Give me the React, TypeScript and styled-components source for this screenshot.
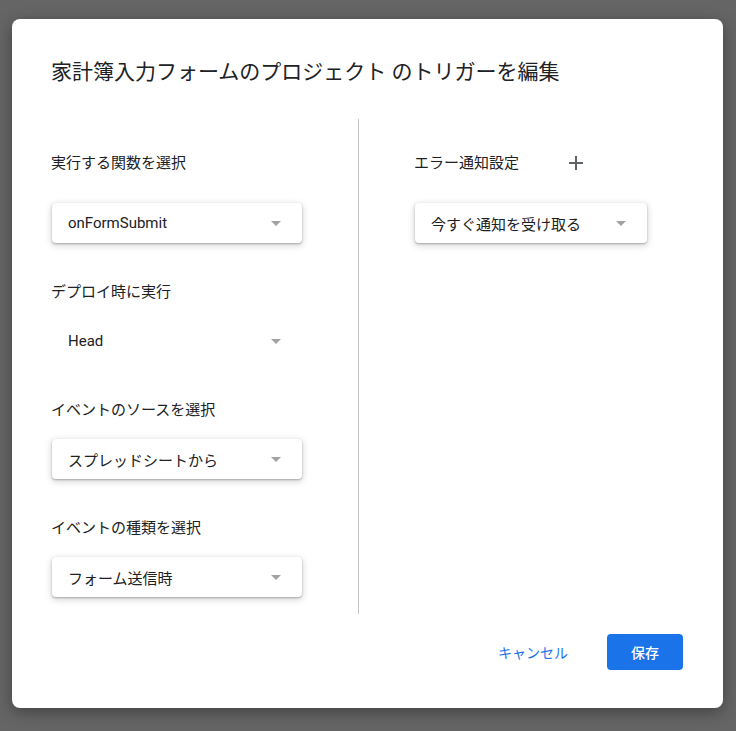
import React from 'react'
import styled, { createGlobalStyle } from 'styled-components'

const GlobalStyle = createGlobalStyle`
	html, body {
		margin: 0;
		padding: 0;
		background: #656565;
	}
	* {
		box-sizing: border-box;
	}
`

const FONT = `Roboto, "Noto Sans CJK JP", "Noto Sans", sans-serif`

interface FieldType {
	label: string
	value: string
	labelGap: number
	flat?: boolean
}

const leftFields: FieldType[] = [
	{ label: '実行する関数を選択', value: 'onFormSubmit', labelGap: 30 },
	{ label: 'デプロイ時に実行', value: 'Head', labelGap: 19, flat: true },
	{ label: 'イベントのソースを選択', value: 'スプレッドシートから', labelGap: 19 },
	{ label: 'イベントの種類を選択', value: 'フォーム送信時', labelGap: 19 },
]

export default function App() {
	return (
		<>
			<GlobalStyle />
			<Overlay>
				<Dialog>
					<Title>家計簿入力フォームのプロジェクト のトリガーを編集</Title>
					<Body>
						<LeftColumn>
							{leftFields.map((field) => (
								<Field key={field.label}>
									<Label $gap={field.labelGap}>{field.label}</Label>
									<Select $width={250} $flat={field.flat}>
										<span>{field.value}</span>
										<Arrow />
									</Select>
								</Field>
							))}
						</LeftColumn>
						<Divider />
						<RightColumn>
							<LabelRow>
								<Label $gap={0}>エラー通知設定</Label>
								<AddButton aria-label="追加">
									<svg width="14" height="14" viewBox="0 0 14 14">
										<path d="M7 0v14M0 7h14" stroke="#5f6368" strokeWidth="2" />
									</svg>
								</AddButton>
							</LabelRow>
							<Select $width={232}>
								<span>今すぐ通知を受け取る</span>
								<Arrow />
							</Select>
						</RightColumn>
					</Body>
					<Footer>
						<CancelButton>キャンセル</CancelButton>
						<SaveButton>保存</SaveButton>
					</Footer>
				</Dialog>
			</Overlay>
		</>
	)
}

const Overlay = styled.div`
	min-height: 100vh;
	padding: 19px 0 0 12px;
	font-family: ${FONT};
	color: #202124;
`

const Dialog = styled.div`
	width: 711px;
	height: 689px;
	background: #fff;
	border-radius: 8px;
	box-shadow: 0 4px 16px rgba(0, 0, 0, 0.35);
	padding: 41px 40px 38px 39px;
	display: flex;
	flex-direction: column;
`

const Title = styled.h1`
	margin: 0;
	font-size: 21px;
	line-height: 24px;
	font-weight: 400;
	color: #202124;
`

const Body = styled.div`
	margin-top: 35px;
	height: 495px;
	display: flex;
`

const LeftColumn = styled.div`
	width: 307px;
	padding-top: 34px;
	display: flex;
	flex-direction: column;
	gap: 39px;
`

const RightColumn = styled.div`
	flex: 1;
	padding: 34px 0 0 55px;
	display: flex;
	flex-direction: column;
	gap: 30px;
`

const Divider = styled.div`
	width: 1px;
	background: #c4c4c4;
`

const Field = styled.div`
	display: flex;
	flex-direction: column;
`

const LabelRow = styled.div`
	display: flex;
	align-items: center;
	gap: 45px;
`

const Label = styled.div<{ $gap: number }>`
	font-size: 15px;
	line-height: 20px;
	margin-bottom: ${({ $gap }) => $gap}px;
`

const AddButton = styled.span`
	width: 24px;
	height: 20px;
	display: flex;
	align-items: center;
	justify-content: center;
`

const Select = styled.div<{ $width: number; $flat?: boolean }>`
	width: ${({ $width }) => $width}px;
	height: 40px;
	margin-left: 1px;
	padding: 0 21px 0 16px;
	display: flex;
	align-items: center;
	justify-content: space-between;
	font-size: 15px;
	color: #202124;
	background: #fff;
	border-radius: 4px;
	box-shadow: ${({ $flat }) =>
		$flat ? 'none' : '0 1px 2px rgba(60, 64, 67, 0.35), 0 2px 6px 1px rgba(60, 64, 67, 0.2)'};
`

const Arrow = styled.span`
	width: 0;
	height: 0;
	border-left: 5px solid transparent;
	border-right: 5px solid transparent;
	border-top: 5px solid #a2a2a2;
`

const Footer = styled.div`
	margin-top: 20px;
	display: flex;
	justify-content: flex-end;
	align-items: center;
	gap: 23px;
`

const CancelButton = styled.button`
	height: 36px;
	padding: 0 16px;
	border: none;
	background: transparent;
	font-family: ${FONT};
	font-size: 14px;
	color: #1a73e8;
	cursor: pointer;
`

const SaveButton = styled.button`
	height: 36px;
	width: 76px;
	border: none;
	border-radius: 4px;
	background: #1a73e8;
	color: #fff;
	font-family: ${FONT};
	font-size: 14px;
	font-weight: 500;
	cursor: pointer;
`
